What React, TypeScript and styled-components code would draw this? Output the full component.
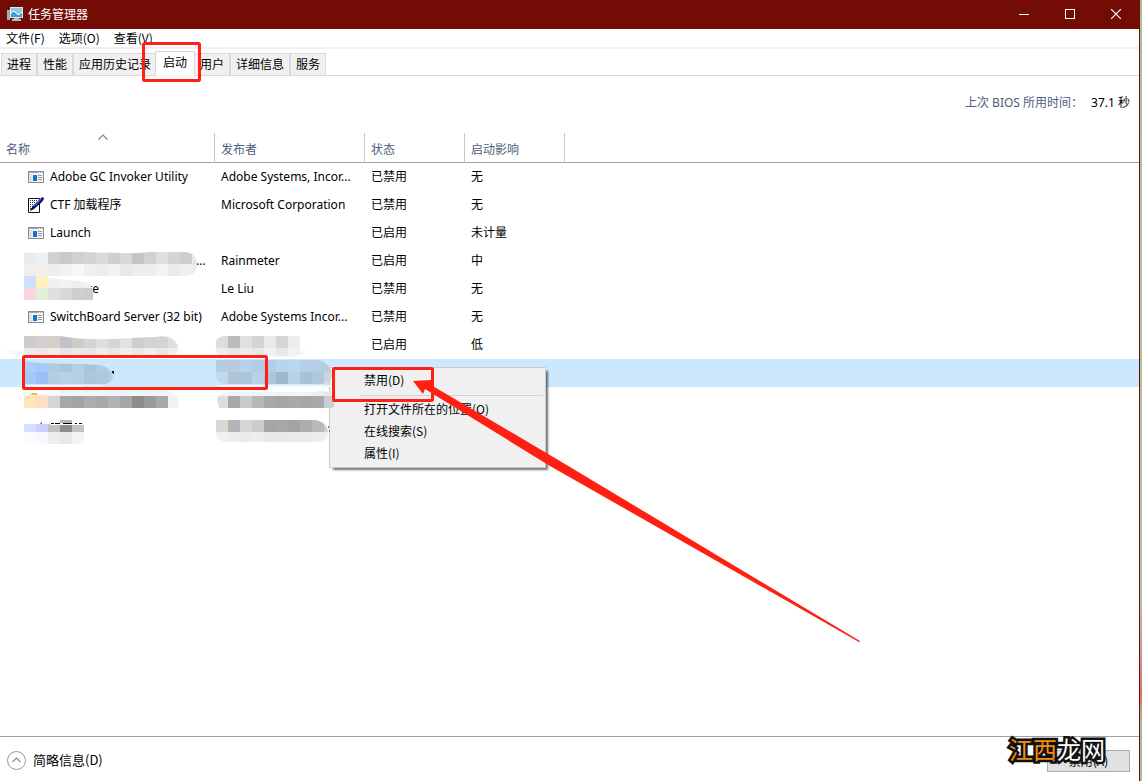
import React from "react";
import styled, { createGlobalStyle } from "styled-components";

const SANS = '"Noto Sans", "Noto Sans CJK SC", sans-serif';
const CJK = '"Noto Sans CJK SC", sans-serif';

const GlobalStyle = createGlobalStyle`
  * { box-sizing: border-box; }
  body { margin: 0; background: #fff; color: #000; font: 12px/16px ${CJK}; }
  button { font: inherit; color: inherit; margin: 0; border: 0; background: none; }
`;

const Desktop = styled.div`
  min-height: 100vh;
  display: flex;
  background: linear-gradient(#a8bf9c 0, #b2c6a6 76%, #c99a8c 84%, #d8706a 89%, #b0a884 91%, #a6bf96 93%);
`;

const Window = styled.div`
  position: relative;
  flex: 1;
  min-width: 0;
  margin-right: 2px;
  display: flex;
  flex-direction: column;
  background: #fff;
  border-right: 1px solid #720c04;
`;

const TitleBar = styled.header`
  height: 29px;
  display: flex;
  align-items: center;
  padding-bottom: 2px;
  background: #720c04;
  color: #fff;
`;

const AppTitle = styled.h1`
  flex: 1;
  display: flex;
  align-items: center;
  gap: 5px;
  margin: 0;
  padding-left: 7px;
  font-size: 12px;
  font-weight: 400;
`;

const CaptionButton = styled.button`
  width: 46px;
  height: 27px;
  padding: 0;
  display: flex;
  align-items: center;
  justify-content: center;
`;

const MenuBar = styled.nav`
  height: 20px;
  display: flex;
  align-items: center;
  border-bottom: 2px solid #f0f0f0;
`;

const MenuButton = styled.button`
  padding: 0 8px 0 6px;
`;

const TabStrip = styled.div`
  height: 27px;
  display: flex;
  align-items: flex-end;
  padding-left: 1px;
  border-bottom: 1px solid #d9d9d9;
`;

const Tab = styled.button<{ $active?: boolean }>`
  position: relative;
  z-index: ${(p) => (p.$active ? 1 : 0)};
  height: ${(p) => (p.$active ? 25 : 22)}px;
  margin: ${(p) => (p.$active ? "0 -1px -1px -2px" : "0")};
  padding: ${(p) => (p.$active ? "0 7px 4px" : "0 5px 2px")};
  border: 1px solid #d9d9d9;
  border-bottom: 0;
  background: ${(p) => (p.$active ? "#fff" : "#f0f0f0")};
  & + & { border-left-width: ${(p) => (p.$active ? 1 : 0)}px; }
`;

const BiosLine = styled.dl`
  height: 57px;
  margin: 0;
  padding: 0 9px 3px 0;
  display: flex;
  align-items: center;
  justify-content: flex-end;
  gap: 8px;
  font-family: ${SANS};
  dt { color: #4c607a; }
  dd { margin: 0; }
`;

const List = styled.main`
  flex: 1;
`;

const Table = styled.table`
  width: 100%;
  table-layout: fixed;
  border-collapse: separate;
  border-spacing: 0;
  font-family: ${SANS};
`;

const Column = styled.col<{ $width?: number }>`
  width: ${(p) => (p.$width ? `${p.$width}px` : "auto")};
`;

const HeadCell = styled.th<{ $ruled?: boolean }>`
  position: relative;
  height: 30px;
  padding: 5px 6px 0;
  border-bottom: 1px solid #a0a0a0;
  border-right: ${(p) => (p.$ruled ? "1px solid #c8c8c8" : "0")};
  color: #4c607a;
  font-weight: 400;
  text-align: left;
`;

const SortMark = styled.svg`
  position: absolute;
  left: 98px;
  top: 1px;
`;

const Row = styled.tr<{ $selected?: boolean }>`
  background: ${(p) => (p.$selected ? "#cce8ff" : "transparent")};
`;

const Cell = styled.td`
  height: 28px;
  padding: 0 6px;
  white-space: nowrap;
  overflow: hidden;
`;

const NameCell = styled.div<{ $indent: number }>`
  display: flex;
  align-items: center;
  gap: 6px;
  padding-left: ${(p) => p.$indent}px;
`;

const ContextMenu = styled.div`
  position: absolute;
  left: 329px;
  top: 367px;
  width: 217px;
  padding: 2px;
  background: #f0f0f0;
  border: 1px solid #ccc;
  box-shadow: 3px 3px 2px -1px rgba(0, 0, 0, 0.55);
  hr {
    margin: 3px 0 3px 28px;
    border: 0;
    border-top: 1px solid #d0d0d0;
  }
`;

const MenuItem = styled.button`
  display: block;
  width: 100%;
  height: 22px;
  padding: 0 0 2px 32px;
  text-align: left;
`;

const Overlay = styled.svg`
  position: absolute;
  left: 0;
  top: 0;
  pointer-events: none;
`;

const Footer = styled.footer`
  position: relative;
  height: 45px;
  padding: 3px 9px 0 6px;
  display: flex;
  align-items: center;
  justify-content: space-between;
  border-top: 1px solid #a0a0a0;
`;

const DetailsButton = styled.button`
  display: flex;
  align-items: center;
  gap: 6px;
  padding: 0;
  font-size: 13px;
  line-height: 18px;
  span { padding-bottom: 2px; }
`;

const PushButton = styled.button`
  width: 83px;
  height: 22px;
  padding: 0;
  border: 1px solid #adadad;
  background: #e1e1e1;
`;

const Watermark = styled.div`
  position: absolute;
  right: 34px;
  top: -4px;
  font: 400 24px/32px ${CJK};
  color: #fff;
  -webkit-text-stroke: 5px #111;
  paint-order: stroke fill;
  span { color: #f08c14; }
`;

const MonitorIcon = () => (
  <svg width="16" height="16" viewBox="0 0 16 16" aria-hidden="true">
    <path d="M0 4h3v10H0z" fill="#a9b0b3" />
    <path d="M1 6h1v1H1z" fill="#45c04c" />
    <path d="M7 11h5v2h2v2H5v-2h2z" fill="#b4bcc0" />
    <rect x="3" y="1" width="13" height="11" fill="#dfe5e8" />
    <rect x="4" y="2" width="11" height="9" fill="#3d9ecb" />
    <path d="M4 2h11v4l-4 3-4-4-3 2z" fill="#8ccbe6" />
    <path d="M4 7l3-2 4 4 4-3" fill="none" stroke="#fff" />
  </svg>
);

const ProgramIcon = () => (
  <svg width="16" height="12" viewBox="0 0 16 12" aria-hidden="true">
    <rect x=".5" y=".5" width="15" height="11" fill="#f6f6f6" stroke="#888c90" />
    <path d="M1 1h14v1H1z" fill="#a4a8ac" />
    <path d="M11 1h1v1h-1zM13 1h1v1h-1z" fill="#fff" />
    <path d="M1 3h3v8H1z" fill="#e2e2e2" />
    <path d="M5 4h4v6H5z" fill="#0a74d8" />
    <path d="M10 4h4v1h-4zM10 6h4v1h-4zM10 8h4v1h-4z" fill="#999" />
  </svg>
);

const PenIcon = () => (
  <svg width="16" height="16" viewBox="0 0 16 16" aria-hidden="true">
    <path d="M.5 1.500h11v14H.5z" fill="#fff" stroke="#111" />
    <path d="M2 3.500h8M2 5.500h7M2 7.500h5M2 9.500h4M2 11.500h2" stroke="#333" strokeDasharray="1 1" />
    <path d="M2 14l2-4 9-9 2-1 1 2-2 3-8 7z" fill="#06106e" />
    <path d="M6 9l7-7" stroke="#3e68e8" strokeWidth="1.500" />
    <path d="M2 14l2-3 1 1z" fill="#000" />
  </svg>
);

type IconKind = "program" | "pen";
interface Entry {
  icon?: IconKind;
  name: string;
  indent: number;
  publisher: string;
  status: string;
  impact: string;
  selected?: boolean;
}

const entries: Entry[] = [
  { icon: "program", name: "Adobe GC Invoker Utility", indent: 22, publisher: "Adobe Systems, Incor...", status: "已禁用", impact: "无" },
  { icon: "pen", name: "CTF 加载程序", indent: 22, publisher: "Microsoft Corporation", status: "已禁用", impact: "无" },
  { icon: "program", name: "Launch", indent: 22, publisher: "", status: "已启用", impact: "未计量" },
  { name: "...", indent: 190, publisher: "Rainmeter", status: "已启用", impact: "中" },
  { name: "te", indent: 82, publisher: "Le Liu", status: "已禁用", impact: "无" },
  { icon: "program", name: "SwitchBoard Server (32 bit)", indent: 22, publisher: "Adobe Systems Incor...", status: "已禁用", impact: "无" },
  { name: "", indent: 22, publisher: "", status: "已启用", impact: "低" },
  { name: "", indent: 22, publisher: "", status: "", impact: "", selected: true },
];

interface Patch {
  id: string;
  x: number;
  y: number;
  shape: string;
  rows: string[][];
}

// Pixelated patches over the private names, in 12px blocks.
const patches: Patch[] = [
  {
    id: "name4", x: 24, y: 252,
    shape: "M24 253L60 252C90 251 120 255 150 252L185 252C194 253 197 258 197 265C197 272 192 276 184 276L24 276z",
    rows: [
      "#e9ecef #edf1f7 #d2d0ce #cbc9c7 #d0d0d0 #d4d4d4 #dadada #cfcfcf #d8d8d6 #c3c4c5 #d2d2d2 #dfdfdf #d4d4d4 #cdced2 #e8e8e8".split(" "),
      "#f1efeb #f1f0ed #eeeeee #f2f2f2 #f7f8f6 #efefef #ededed #f2f2f2 #e9e9e9 #eeeeee #eeeeee #f3f3f3 #eaeaea #efefef #ededed".split(" "),
    ],
  },
  {
    id: "name5", x: 24, y: 276,
    shape: "M24 276H48V278C68 280 86 281 90 284Q94 290 93 300H24z",
    rows: [
      "#cfe0ff #fff0c0 #f0f0ee #f2f2f2 #eeeeee #f1f1f1".split(" "),
      "#fad7dc #e3f0d8 #dfdfdf #d8d8d8 #cfcfcf #cccccc".split(" "),
    ],
  },
  {
    id: "name7", x: 24, y: 336,
    shape: "M24 336H60C90 342 125 338 155 337C172 334 179 342 178 351Q176 356 170 356H24z",
    rows: [
      "#cecccc #d2cfcd #d4d0c9 #bfc2c9 #cdccca #d6d4d1 #dedede #d5d5d5 #dfe3df #cfcccc #d2d2d2 #d6d4d1 #dedede".split(" "),
      "#ececec #e9e9ea #ededeb #e5e5e7 #e9e9e9 #e8e6e4 #ececea #e7e7e8 #edefed #e9e9e9 #eceeef #e8e8e6 #efefef".split(" "),
    ],
  },
  {
    id: "pub7", x: 216, y: 336,
    shape: "M216 341Q218 336 226 336H300V356H222Q216 356 216 350z",
    rows: [
      "#dddddb #bcbcbe #dfe0e2 #d5d4d4 #e8eaec #d6d5d4 #eaecee".split(" "),
      "#ededed #e7e7e9 #ececea #e8e8e8 #f0f2f3 #e8e8e8 #f2f2f2".split(" "),
    ],
  },
  {
    id: "name8", x: 24, y: 360,
    shape: "M24 361C50 365 80 363 98 365C108 366 113 372 113 377Q111 384 104 384H24z",
    rows: [
      "#acceff #a6caff #b2cadf #adc4d7 #b4cee4 #acc4d7 #b2ccdf #b9cfdf".split(" "),
      "#a6c8f7 #9dc0f4 #b4cde3 #b6d2e8 #b4cee5 #adc6dc #b0c7dc #b5cde1".split(" "),
    ],
  },
  {
    id: "pub8", x: 216, y: 360,
    shape: "M216 360H315C327 360 332 369 332 376Q330 384 322 384H225Q216 383 216 376z",
    rows: [
      "#b7cbe2 #b6cce2 #b7d2ec #b5cde4 #b4cde6 #b8d4ea #bad7f0 #b4d0e8 #b4cde2 #bccbd7".split(" "),
      "#c0d9f0 #b0c5d6 #adc4d8 #b9d2e7 #adc6dc #9fb7ce #bad1e5 #a7c1d7 #b1c7d9 #c9d5df".split(" "),
    ],
  },
  {
    id: "name9", x: 24, y: 384,
    shape: "M24 394H60V390H164C174 390 180 398 179 408H24z",
    rows: [
      "#fff7e8 #fdf1e7 #eef6fc #eef6fc #eef6fc #eef6fc #eef6fc #eef6fc #eef6fc #eef6fc #eef6fc #eef6fc #f2f6fc".split(" "),
      "#ffe6b7 #ffdfc4 #d7d5d2 #a9a8a8 #a3a3a3 #acacac #a8a8a8 #b1b2b3 #a5a5a5 #918c88 #989c9a #a8a8a8 #f0f2f4".split(" "),
    ],
  },
  {
    id: "pub9", x: 216, y: 384,
    shape: "M217 399Q220 390 240 392H315C328 388 335 395 334 407L324 410V408H219z",
    rows: [
      "#f4f4f4 #eef4fa #eef4fa #eef4fa #eef4fa #eef4fa #eef4fa #eef4fa #e7eef4 #e8e8ea".split(" "),
      "#dedfdd #aaa9a9 #c7c9cc #b8b6b7 #aaa9aa #a5a5a5 #aaa9aa #a6a6a8 #a9a9aa #ccced2".split(" "),
    ],
  },
  {
    id: "name10", x: 24, y: 420,
    shape: "M24 424H52V421H84V444H24z",
    rows: [
      "#d6dfff #cdd0ff #c0c2c1 #8e8d8a #c1c4c5".split(" "),
      "#fafaff #f8f8ff #eeeeec #e9e9e7 #f4f5f6".split(" "),
    ],
  },
  {
    id: "pub10", x: 216, y: 420,
    shape: "M216 420H314C324 421 328 426 328 434Q327 441 317 442H225Q216 440 216 433z",
    rows: [
      "#d9d9d4 #b4b5bb #d5d5d4 #cacccd #a5a5a2 #a8a8a8 #a4a4a4 #adadae #b8babc #ccd0d4".split(" "),
      "#f1f1f0 #eeeeef #ebebea #eeeeee #e8e8e8 #e9e9e8 #ebebea #eaeaea #ededed #f0f0f0".split(" "),
    ],
  },
];

const Mosaics = () => (
  <Overlay width="340" height="450" viewBox="0 0 340 450" shapeRendering="crispEdges" aria-hidden="true">
    <path d="M6 350H180Q176 356 120 357H24Q10 356 6 350zM212 350H308Q302 357 290 357H222z" fill="#f3f9fe" />
    {patches.map((p) => (
      <g key={p.id}>
        <clipPath id={p.id}><path d={p.shape} /></clipPath>
        <g clipPath={`url(#${p.id})`}>
          {p.rows.map((row, r) =>
            row.map((fill, c) => (
              <rect key={`${r}-${c}`} x={p.x + c * 12} y={p.y + r * 12} width="12" height="12" fill={fill} />
            ))
          )}
        </g>
      </g>
    ))}
    <path d="M14 385H110Q70 388 24 387zM214 385H330V387H222z" fill="#eef7ff" />
    <path d="M29 395L33 393H37V395z" fill="#f7b83c" />
    <path d="M39 424l3-2v2z" fill="#7a78ee" />
    <path d="M50 421H84V425H50z" fill="#fff" />
    <path d="M60 420H72V423H60z" fill="#b4b4b0" />
    <path d="M51 423.500h3M55 423.500h5M63 423.500h9M75 423.500h2M79 423.500h3" stroke="#000" />
    <path d="M112 371h2v3h-1z" fill="#111" />
    <path d="M328 426v2M329 430v2" stroke="#4486c8" />
  </Overlay>
);

const Annotations = () => (
  <Overlay width="870" height="650" viewBox="0 0 870 650" aria-hidden="true">
    <g fill="none" stroke="#ff2013" strokeWidth="3">
      <rect x="143.500" y="43.500" width="56" height="37" rx="1" />
      <rect x="23.500" y="356.500" width="243" height="32" rx="1" />
      <rect x="333.500" y="368.500" width="99" height="32" rx="1" />
    </g>
    <path d="M413 381L431 380L431 385L560 461L860 641L859 642L550 466L425 389L423 394z" fill="#ff2013" />
  </Overlay>
);

export default function App() {
  return (
    <Desktop>
      <GlobalStyle />
      <Window>
        <TitleBar>
          <AppTitle><MonitorIcon />任务管理器</AppTitle>
          <CaptionButton aria-label="最小化">
            <svg width="10" height="10"><path d="M0 5.500h10" stroke="#fff" /></svg>
          </CaptionButton>
          <CaptionButton aria-label="最大化">
            <svg width="10" height="10"><rect x=".5" y=".5" width="9" height="9" fill="none" stroke="#fff" /></svg>
          </CaptionButton>
          <CaptionButton aria-label="关闭">
            <svg width="10" height="10"><path d="M0 0l10 10M10 0L0 10" stroke="#fff" strokeWidth="1.200" /></svg>
          </CaptionButton>
        </TitleBar>
        <MenuBar>
          <MenuButton>文件(F)</MenuButton>
          <MenuButton>选项(O)</MenuButton>
          <MenuButton>查看(V)</MenuButton>
        </MenuBar>
        <TabStrip role="tablist">
          <Tab role="tab">进程</Tab>
          <Tab role="tab">性能</Tab>
          <Tab role="tab">应用历史记录</Tab>
          <Tab role="tab" aria-selected $active>启动</Tab>
          <Tab role="tab">用户</Tab>
          <Tab role="tab">详细信息</Tab>
          <Tab role="tab">服务</Tab>
        </TabStrip>
        <BiosLine>
          <dt>上次 BIOS 所用时间：</dt>
          <dd>37.1 秒</dd>
        </BiosLine>
        <List>
          <Table>
            <colgroup>
              <Column $width={215} />
              <Column $width={150} />
              <Column $width={100} />
              <Column $width={100} />
              <Column />
            </colgroup>
            <thead>
              <tr>
                <HeadCell $ruled aria-sort="ascending">
                  <SortMark width="10" height="6"><path d="M.5 5.500L5 1l4.500 4.500" fill="none" stroke="#7c8796" strokeWidth="1.200" /></SortMark>
                  名称
                </HeadCell>
                <HeadCell $ruled>发布者</HeadCell>
                <HeadCell $ruled>状态</HeadCell>
                <HeadCell $ruled>启动影响</HeadCell>
                <HeadCell />
              </tr>
            </thead>
            <tbody>
              {entries.map((e, i) => (
                <Row key={i} $selected={e.selected}>
                  <Cell>
                    <NameCell $indent={e.indent}>
                      {e.icon === "program" && <ProgramIcon />}
                      {e.icon === "pen" && <PenIcon />}
                      {e.name}
                    </NameCell>
                  </Cell>
                  <Cell>{e.publisher}</Cell>
                  <Cell>{e.status}</Cell>
                  <Cell>{e.impact}</Cell>
                  <Cell />
                </Row>
              ))}
            </tbody>
          </Table>
        </List>
        <Footer>
          <DetailsButton>
            <svg width="21" height="21" viewBox="0 0 21 21" fill="none" aria-hidden="true">
              <circle cx="10.500" cy="10.500" r="9" stroke="#999" />
              <path d="M6.500 12l4-4 4 4" stroke="#999" strokeWidth="1.500" />
            </svg>
            <span>简略信息(D)</span>
          </DetailsButton>
          <PushButton>禁用(A)</PushButton>
          <Watermark><span>江西</span>龙网</Watermark>
        </Footer>
        <ContextMenu role="menu">
          <MenuItem role="menuitem">禁用(D)</MenuItem>
          <hr />
          <MenuItem role="menuitem">打开文件所在的位置(O)</MenuItem>
          <MenuItem role="menuitem">在线搜索(S)</MenuItem>
          <MenuItem role="menuitem">属性(I)</MenuItem>
        </ContextMenu>
        <Mosaics />
        <Annotations />
      </Window>
    </Desktop>
  );
}
